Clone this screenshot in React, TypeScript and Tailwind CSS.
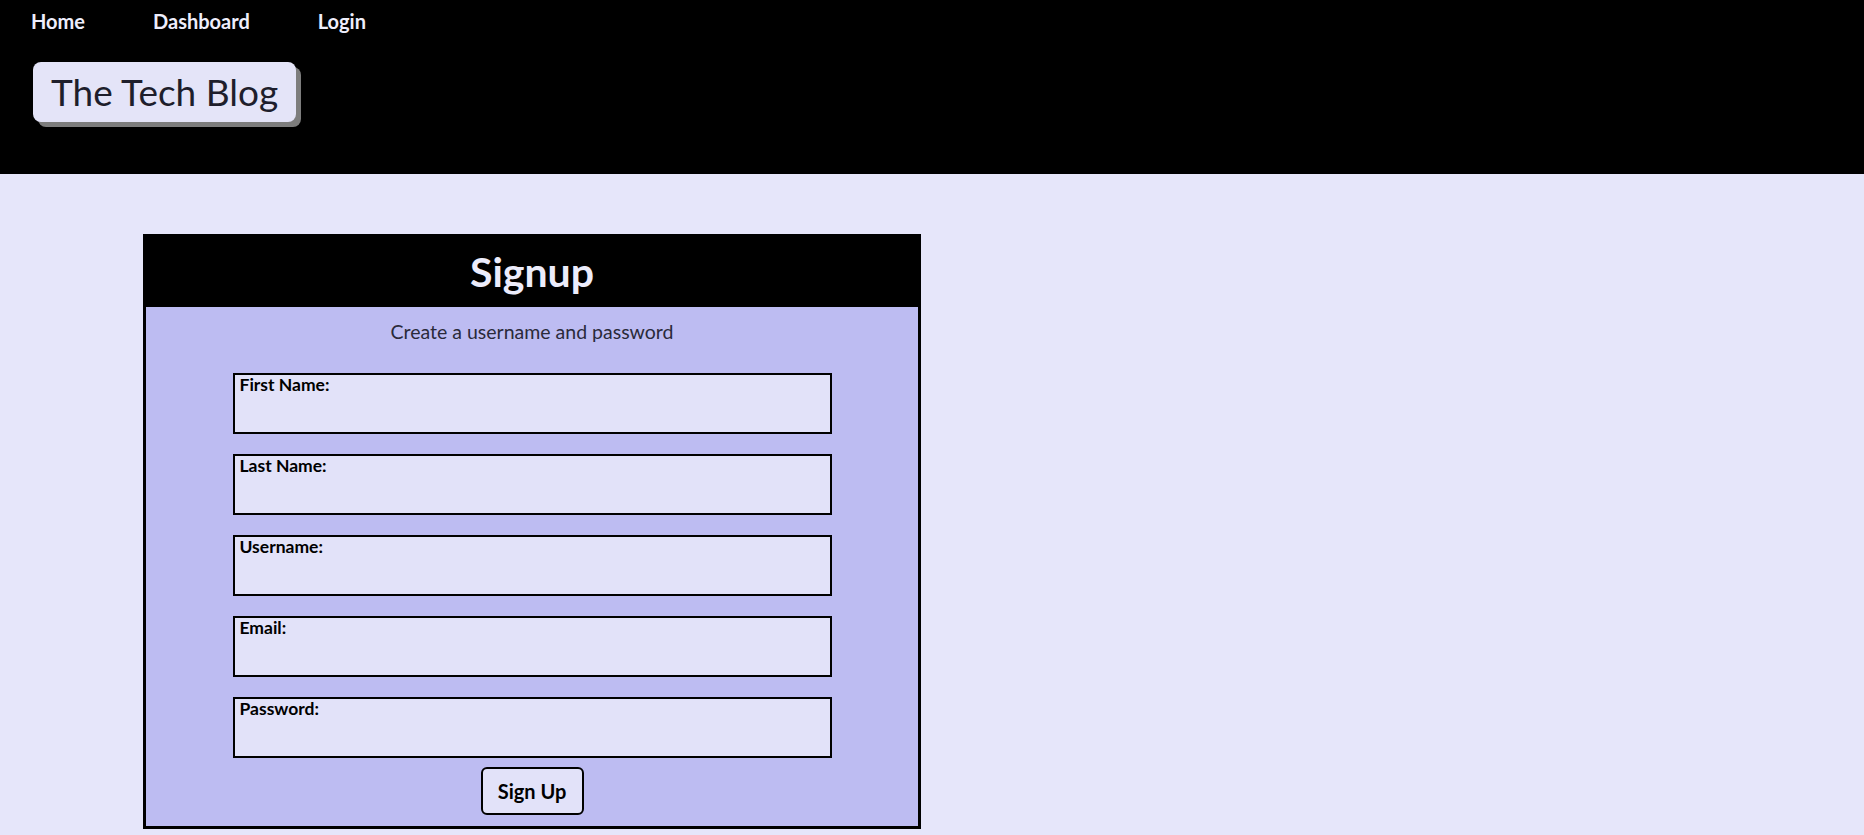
import { useState } from "react";

const fields = [
  { id: "first", label: "First Name:", type: "text" },
  { id: "last", label: "Last Name:", type: "text" },
  { id: "username", label: "Username:", type: "text" },
  { id: "email", label: "Email:", type: "email" },
  { id: "password", label: "Password:", type: "password" },
];

export default function App() {
  const [values, setValues] = useState<Record<string, string>>({});

  return (
    <div className="min-h-screen bg-[#e6e6fa] font-['Lato','Open_Sans',sans-serif]">
      <header className="h-[174px] bg-black px-[31px] pt-[8px]">
        <nav className="flex gap-[68px] text-[20px] font-bold leading-[26px] text-[#eeeefc]">
          <a href="#">Home</a>
          <a href="#">Dashboard</a>
          <a href="#">Login</a>
        </nav>
        <div className="mt-[28px] ml-[2px] inline-block rounded-lg bg-[#e4e4f8] px-[18px] py-[4px] text-[37px] leading-[52px] text-[#1e1e2c] shadow-[5px_5px_0_#7d7d7d]">
          The Tech Blog
        </div>
      </header>

      <main className="pl-[143px] pt-[60px]">
        <div className="w-[778px] border-[3px] border-black bg-[#bdbcf2]">
          <div className="flex h-[70px] items-center justify-center bg-black">
            <h1 className="text-[41px] font-bold text-[#ececfb]">Signup</h1>
          </div>
          <form
            className="flex flex-col items-center pt-[12px] pb-[11px]"
            onSubmit={(e) => e.preventDefault()}
          >
            <p className="text-[19.5px] leading-[26px] text-[#2a2a3a]">Create a username and password</p>
            <div className="mt-[28px] flex flex-col gap-[20px]">
              {fields.map((f) => (
                <div key={f.id} className="flex h-[61px] w-[599px] flex-col border-2 border-black bg-[#e2e2f9] px-[5px]">
                  <label htmlFor={f.id} className="text-[17.5px] font-bold leading-[20px] text-black">
                    {f.label}
                  </label>
                  <input
                    id={f.id}
                    type={f.type}
                    value={values[f.id] ?? ""}
                    onChange={(e) => setValues({ ...values, [f.id]: e.target.value })}
                    className="flex-1 bg-transparent text-[16px] outline-none"
                  />
                </div>
              ))}
            </div>
            <button
              type="submit"
              className="mt-[9px] h-[48px] w-[103px] rounded-md border-2 border-black bg-[#e2e2f9] text-[20px] font-bold text-black"
            >
              Sign Up
            </button>
          </form>
        </div>
      </main>
    </div>
  );
}
